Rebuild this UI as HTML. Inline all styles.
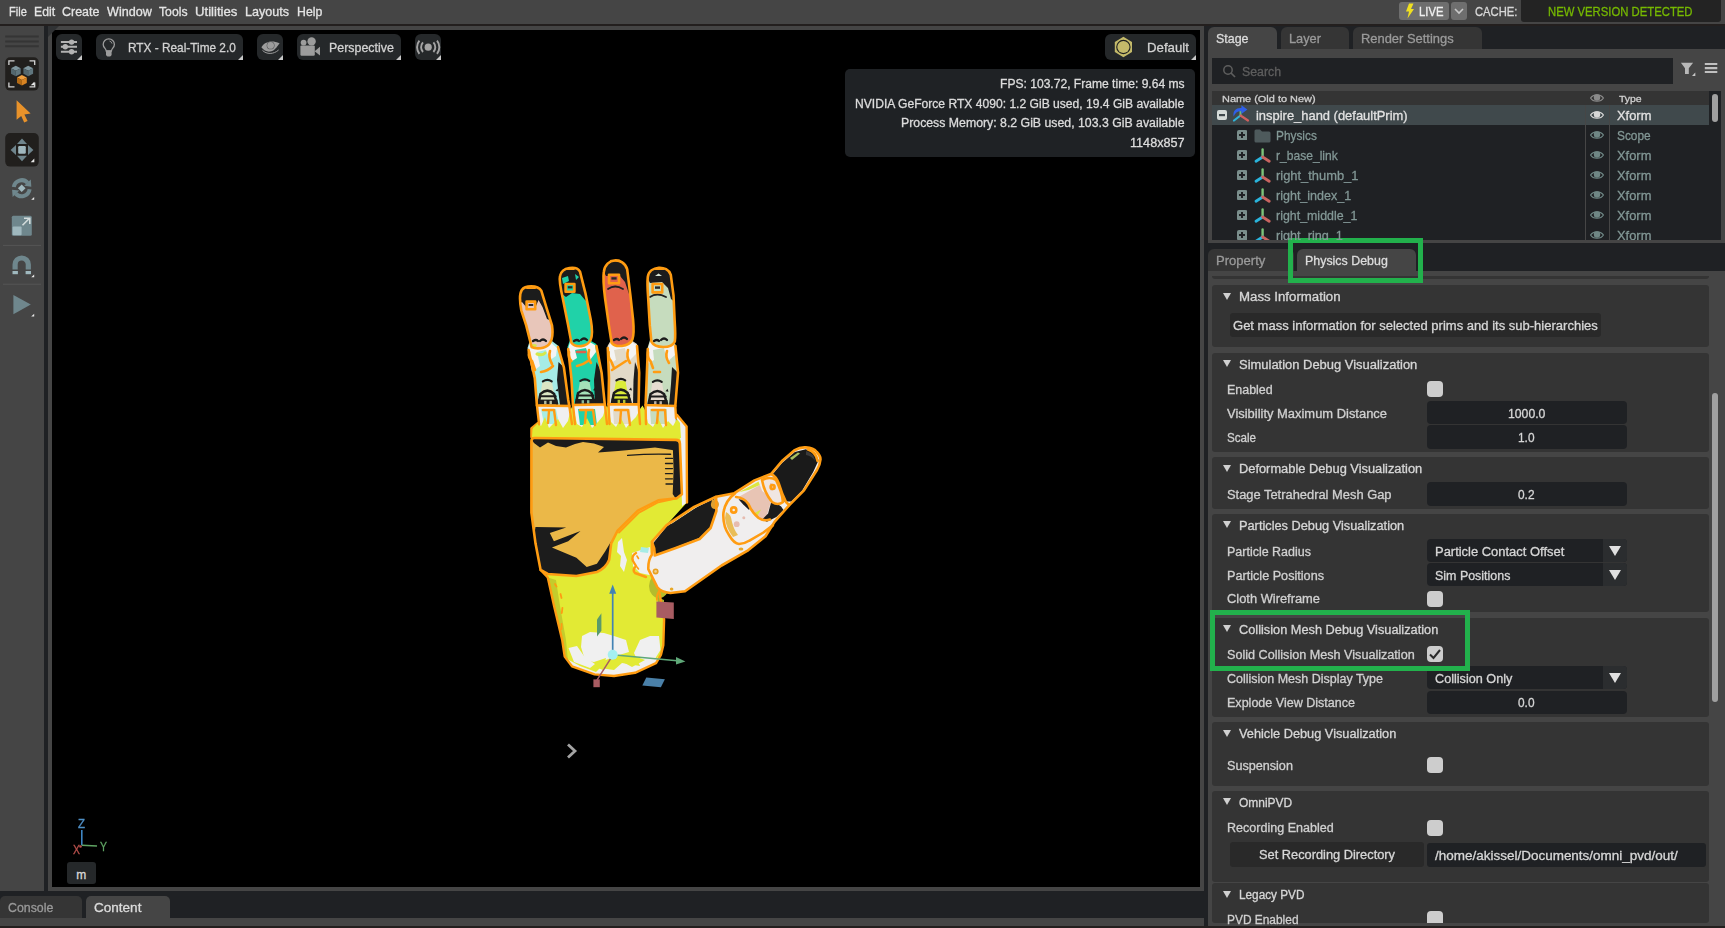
<!DOCTYPE html>
<html><head><meta charset="utf-8"><title>Isaac Sim</title><style>
html,body{margin:0;padding:0;background:#454545;}
#r{position:relative;width:1725px;height:928px;overflow:hidden;font-family:"Liberation Sans",sans-serif;}
#r div,#r svg,#r span{position:absolute;}
#r span{white-space:pre;line-height:16px;height:16px;transform-origin:0 50%;-webkit-text-stroke:0.3px currentColor;}
#r .clip{overflow:hidden;}
</style></head><body>
<div id="r">
<div style="left:0px;top:0px;width:1725px;height:928px;background:#454545;"></div>
<div style="left:0px;top:24px;width:1725px;height:2px;background:#231f1e;"></div>
<div style="left:44px;top:26px;width:4px;height:865px;background:#1f2124;"></div>
<div style="left:52px;top:30px;width:1148px;height:857px;background:#000;"></div>
<svg style="left:48px;top:26px" width="12" height="12" viewBox="0 0 12 12"><path d="M0 0 H11 L0 11 Z" fill="#303234"/></svg>
<div style="left:1204px;top:26px;width:4px;height:901px;background:#1f2124;"></div>
<div style="left:0px;top:891px;width:1204px;height:27px;background:#1f2124;"></div>
<div style="left:0px;top:896px;width:82px;height:22px;background:#353535;border-radius:5px 5px 0 0;"></div>
<div style="left:86px;top:896px;width:84px;height:22px;background:#454545;border-radius:5px 5px 0 0;"></div>
<div style="left:0px;top:926px;width:1725px;height:2px;background:#231f1e;"></div>
<div style="left:1399px;top:2px;width:50px;height:18px;background:#6e6e6e;border-radius:3px;"></div>
<div style="left:1451px;top:2px;width:16px;height:18px;background:#6e6e6e;border-radius:3px;"></div>
<div style="left:1521px;top:0px;width:200px;height:22px;background:#232323;border-radius:0 0 3px 3px;"></div>
<svg style="left:1405px;top:3px" width="10" height="16" viewBox="0 0 10 16"><path d="M4 0.5 L8.5 0.5 L6 6 L9 6 L2.5 15.5 L4 8.5 L1 8.5 Z" fill="#f0e020"/></svg>
<svg style="left:1453px;top:6px" width="12" height="10" viewBox="0 0 12 10"><path d="M2 3 L6 7 L10 3" stroke="#c8c8c8" stroke-width="1.6" fill="none"/></svg>
<div style="left:1208px;top:26px;width:517px;height:23px;background:#1f2124;"></div>
<div style="left:1208px;top:27px;width:69px;height:23px;background:#454545;border-radius:6px 6px 0 0;"></div>
<div style="left:1281px;top:27px;width:68px;height:22px;background:#353535;border-radius:6px 6px 0 0;"></div>
<div style="left:1353px;top:27px;width:129px;height:22px;background:#353535;border-radius:6px 6px 0 0;"></div>
<div style="left:1212px;top:58px;width:461px;height:26px;background:#1f2124;"></div>
<svg style="left:1222px;top:64px" width="15" height="15" viewBox="0 0 15 15"><circle cx="6" cy="6" r="4.2" stroke="#5e5e5e" stroke-width="1.5" fill="none"/><path d="M9 9 L13 13" stroke="#5e5e5e" stroke-width="1.7"/></svg>
<svg style="left:1678px;top:60px" width="44" height="18" viewBox="1678 60 44 18"><path d="M1680.9 62.7 H1693.1 L1688.8 68.3 V73.9 H1685 V68.3 Z" fill="#b8b8b8"/><path d="M1695.3 72.6 V76 H1692 Z" fill="#c8c8c8"/><path d="M1704.8 64 H1717.3 M1704.8 68.1 H1717.3 M1704.8 72 H1717.3" stroke="#c0c0c0" stroke-width="2.2"/></svg>
<div style="left:1212px;top:91px;width:509px;height:149px;background:#1f2124;"></div>
<div style="left:1212px;top:91px;width:497px;height:14px;background:#343434;"></div>
<div style="left:1212px;top:105px;width:497px;height:20px;background:#40494c;"></div>
<div style="left:1585px;top:105px;width:1px;height:135px;background:#464646;"></div>
<div style="left:1609px;top:105px;width:1px;height:135px;background:#464646;"></div>
<div style="left:1712px;top:94px;width:6px;height:28px;background:#a0a0a0;border-radius:3px;"></div>
<svg style="left:1590.1px;top:93px" width="14" height="10" viewBox="0 0 14 10"><path d="M0.6 5 C3 0.7 11 0.7 13.4 5 C11 9.3 3 9.3 0.6 5 Z" fill="none" stroke="#8a8a8a" stroke-width="1.2"/><circle cx="7" cy="4.5" r="3.2" fill="#8a8a8a"/></svg>
<svg style="left:1217px;top:110px" width="10" height="10" viewBox="0 0 10 10"><rect width="10" height="10" rx="2" fill="#d5dbd8"/><rect x="2" y="4" width="6" height="2.2" fill="#40494c"/></svg>
<svg style="left:1232px;top:105px" width="18" height="18" viewBox="0 0 18 18"><path d="M8.5 10.5 V5" stroke="#6fbf73" stroke-width="2"/><path d="M8.5 10.5 L2 15.5" stroke="#2fb4d8" stroke-width="2.2" stroke-linecap="round"/><path d="M8.5 10.5 L16 15.5" stroke="#d0605e" stroke-width="2.2" stroke-linecap="round"/><path d="M1.6 11.4 C0.6 5.6 4.4 2.6 9.4 3 V0.2 L15.4 4.6 L9.4 9 V6.2 C5.6 5.8 3.4 7.6 1.6 11.4 Z" fill="#2f5fe8"/></svg>
<svg style="left:1590.1px;top:110.2px" width="14" height="10" viewBox="0 0 14 10"><path d="M0.6 5 C3 0.7 11 0.7 13.4 5 C11 9.3 3 9.3 0.6 5 Z" fill="none" stroke="#d8d8d8" stroke-width="1.2"/><circle cx="7" cy="4.5" r="3.2" fill="#d8d8d8"/></svg>
<div style="left:1208px;top:243px;width:517px;height:28px;background:#1f2124;"></div>
<div style="left:1208px;top:249px;width:86px;height:22px;background:#353535;border-radius:6px 6px 0 0;"></div>
<div style="left:1297px;top:249px;width:119px;height:22px;background:#454545;border-radius:6px 6px 0 0;"></div>
<div style="left:1212px;top:276px;width:497px;height:3px;background:#343434;border-radius:0 0 3px 3px;"></div>
<div style="left:1212px;top:285px;width:497px;height:62px;background:#343434;border-radius:3px;"></div>
<div style="left:1212px;top:353px;width:497px;height:98.5px;background:#343434;border-radius:3px;"></div>
<div style="left:1212px;top:457px;width:497px;height:51.5px;background:#343434;border-radius:3px;"></div>
<div style="left:1212px;top:514px;width:497px;height:98px;background:#343434;border-radius:3px;"></div>
<div style="left:1212px;top:618px;width:497px;height:98.5px;background:#343434;border-radius:3px;"></div>
<div style="left:1212px;top:722px;width:497px;height:64px;background:#343434;border-radius:3px;"></div>
<div style="left:1212px;top:791px;width:497px;height:90.5px;background:#343434;border-radius:3px;"></div>
<div style="left:1212px;top:883px;width:497px;height:40px;background:#343434;border-radius:3px;"></div>
<div style="left:1712px;top:393px;width:6px;height:309px;background:#a0a0a0;border-radius:3px;"></div>
<svg style="left:1223px;top:293.0px" width="8" height="7" viewBox="0 0 8 7"><path d="M0 0 H8 L4 7 Z" fill="#d0d0d0"/></svg>
<div style="left:1230px;top:313px;width:371px;height:24px;background:#292929;border-radius:3px;"></div>
<svg style="left:1223px;top:360.3px" width="8" height="7" viewBox="0 0 8 7"><path d="M0 0 H8 L4 7 Z" fill="#d0d0d0"/></svg>
<div style="left:1427px;top:381px;width:16px;height:16px;background:#cdcdcd;border-radius:4px;"></div>
<div style="left:1427px;top:401px;width:200px;height:23px;background:#1f2124;border-radius:4px;"></div>
<div style="left:1427px;top:425px;width:200px;height:23.5px;background:#1f2124;border-radius:4px;"></div>
<svg style="left:1223px;top:464.5px" width="8" height="7" viewBox="0 0 8 7"><path d="M0 0 H8 L4 7 Z" fill="#d0d0d0"/></svg>
<div style="left:1427px;top:482px;width:200px;height:23.69999999999999px;background:#1f2124;border-radius:4px;"></div>
<svg style="left:1223px;top:521.3px" width="8" height="7" viewBox="0 0 8 7"><path d="M0 0 H8 L4 7 Z" fill="#d0d0d0"/></svg>
<div style="left:1427px;top:539px;width:200px;height:23px;background:#1f2124;border-radius:4px;"></div>
<div style="left:1603px;top:539px;width:24px;height:23px;background:#2b2d2f;border-radius:0 4px 4px 0;"></div>
<svg style="left:1609px;top:546px" width="12" height="10" viewBox="0 0 12 10"><path d="M0 0 H12 L6 10 Z" fill="#e0e0e0"/></svg>
<div style="left:1427px;top:563px;width:200px;height:23.299999999999955px;background:#1f2124;border-radius:4px;"></div>
<div style="left:1603px;top:563px;width:24px;height:23.299999999999955px;background:#2b2d2f;border-radius:0 4px 4px 0;"></div>
<svg style="left:1609px;top:570px" width="12" height="10" viewBox="0 0 12 10"><path d="M0 0 H12 L6 10 Z" fill="#e0e0e0"/></svg>
<div style="left:1427px;top:590.5px;width:16px;height:16px;background:#cdcdcd;border-radius:4px;"></div>
<svg style="left:1223px;top:625.3px" width="8" height="7" viewBox="0 0 8 7"><path d="M0 0 H8 L4 7 Z" fill="#d0d0d0"/></svg>
<div style="left:1427px;top:646.3px;width:16px;height:16px;background:#cdcdcd;border-radius:4px;"></div>
<svg style="left:1427px;top:646.3px" width="16" height="16" viewBox="0 0 16 16"><path d="M3 8.5 L6.5 12 L13 4" stroke="#2a2a2a" stroke-width="2" fill="none"/></svg>
<div style="left:1427px;top:666px;width:200px;height:23px;background:#1f2124;border-radius:4px;"></div>
<div style="left:1603px;top:666px;width:24px;height:23px;background:#2b2d2f;border-radius:0 4px 4px 0;"></div>
<svg style="left:1609px;top:673px" width="12" height="10" viewBox="0 0 12 10"><path d="M0 0 H12 L6 10 Z" fill="#e0e0e0"/></svg>
<div style="left:1427px;top:690.5px;width:200px;height:23.0px;background:#1f2124;border-radius:4px;"></div>
<svg style="left:1223px;top:729.6px" width="8" height="7" viewBox="0 0 8 7"><path d="M0 0 H8 L4 7 Z" fill="#d0d0d0"/></svg>
<div style="left:1427px;top:757px;width:16px;height:16px;background:#cdcdcd;border-radius:4px;"></div>
<svg style="left:1223px;top:798.4px" width="8" height="7" viewBox="0 0 8 7"><path d="M0 0 H8 L4 7 Z" fill="#d0d0d0"/></svg>
<div style="left:1427px;top:819.7px;width:16px;height:16px;background:#cdcdcd;border-radius:4px;"></div>
<div style="left:1230px;top:842px;width:194px;height:24.5px;background:#292929;border-radius:3px;"></div>
<div style="left:1427px;top:843.3px;width:279px;height:23.3px;background:#1f2124;border-radius:3px;"></div>
<svg style="left:1223px;top:890.6px" width="8" height="7" viewBox="0 0 8 7"><path d="M0 0 H8 L4 7 Z" fill="#d0d0d0"/></svg>
<div style="left:1427px;top:911.3px;width:16px;height:11.7px;background:#cdcdcd;border-radius:4px 4px 0 0"></div>
<div style="left:1288px;top:238px;width:135px;height:45px;box-sizing:border-box;border:5px solid #22b14c"></div>
<div style="left:1210px;top:610px;width:260px;height:60.6px;box-sizing:border-box;border:5px solid #22b14c"></div>
<div style="left:56px;top:34px;width:26px;height:26px;background:#25282a;border-radius:6px;"></div>
<svg style="left:77px;top:55px" width="5" height="5" viewBox="0 0 5 5"><path d="M5 0 V5 H0 Z" fill="#c8c8c8"/></svg>
<div style="left:96.3px;top:34px;width:146.7px;height:26px;background:#25282a;border-radius:6px;"></div>
<svg style="left:238.0px;top:55px" width="5" height="5" viewBox="0 0 5 5"><path d="M5 0 V5 H0 Z" fill="#c8c8c8"/></svg>
<div style="left:257px;top:34px;width:26px;height:26px;background:#25282a;border-radius:6px;"></div>
<svg style="left:278px;top:55px" width="5" height="5" viewBox="0 0 5 5"><path d="M5 0 V5 H0 Z" fill="#c8c8c8"/></svg>
<div style="left:297.3px;top:34px;width:103.7px;height:26px;background:#25282a;border-radius:6px;"></div>
<svg style="left:396.0px;top:55px" width="5" height="5" viewBox="0 0 5 5"><path d="M5 0 V5 H0 Z" fill="#c8c8c8"/></svg>
<div style="left:415px;top:34px;width:26px;height:26px;background:#25282a;border-radius:6px;"></div>
<svg style="left:436px;top:55px" width="5" height="5" viewBox="0 0 5 5"><path d="M5 0 V5 H0 Z" fill="#c8c8c8"/></svg>
<div style="left:1105.3px;top:34px;width:90.7px;height:26px;background:#25282a;border-radius:6px;"></div>
<svg style="left:1191.0px;top:55px" width="5" height="5" viewBox="0 0 5 5"><path d="M5 0 V5 H0 Z" fill="#c8c8c8"/></svg>
<div style="left:845px;top:69px;width:350px;height:88px;background:#1f2225;border-radius:5px;"></div>
<div style="left:67px;top:862px;width:29px;height:22px;background:#25282a;border-radius:3px;"></div>
<svg style="left:70px;top:825px" width="40" height="30" viewBox="0 0 40 30"><path d="M11.8 5 V20.3" stroke="#3f86c4" stroke-width="1.6"/><path d="M11.8 20.3 L27 21" stroke="#5fa463" stroke-width="1.6"/><circle cx="10.5" cy="21.5" r="1.3" fill="#b8504c"/></svg>
<svg style="left:560px;top:738px" width="24" height="26" viewBox="0 0 24 26"><path d="M8 6.5 L15 13 L8 19.5" stroke="#a4a4a4" stroke-width="2.8" fill="none" stroke-linejoin="miter"/></svg>
<div class="clip" style="left:0;top:0;width:1725px;height:240px">
<svg style="left:1237px;top:130px" width="10" height="10" viewBox="0 0 10 10"><rect width="10.4" height="10.4" rx="2" fill="#7a8e8c"/><path d="M5 2 V8 M2 5 H8" stroke="#1f2124" stroke-width="2"/></svg>
<svg style="left:1254px;top:129px" width="17" height="14" viewBox="0 0 17 14"><path d="M0.5 2 Q0.5 0.5 2 0.5 H6 L8 2.5 H15 Q16.5 2.5 16.5 4 V12 Q16.5 13.5 15 13.5 H2 Q0.5 13.5 0.5 12 Z" fill="#4e5a5c"/></svg>
<svg style="left:1590.1px;top:130.4px" width="14" height="10" viewBox="0 0 14 10"><path d="M0.6 5 C3 0.7 11 0.7 13.4 5 C11 9.3 3 9.3 0.6 5 Z" fill="none" stroke="#6f8785" stroke-width="1.2"/><circle cx="7" cy="4.5" r="3.2" fill="#6f8785"/></svg>
<svg style="left:1237px;top:150px" width="10" height="10" viewBox="0 0 10 10"><rect width="10.4" height="10.4" rx="2" fill="#7a8e8c"/><path d="M5 2 V8 M2 5 H8" stroke="#1f2124" stroke-width="2"/></svg>
<svg style="left:1253.5px;top:147px" width="17" height="17" viewBox="0 0 17 17"><path d="M8.6 10 V2.4" stroke="#7cc47a" stroke-width="2.4" stroke-linecap="round"/><path d="M8.6 10 L2 14.2" stroke="#2ab4dc" stroke-width="2.8" stroke-linecap="round"/><path d="M8.6 10 L15.2 14.2" stroke="#c86460" stroke-width="2.8" stroke-linecap="round"/></svg>
<svg style="left:1590.1px;top:150.4px" width="14" height="10" viewBox="0 0 14 10"><path d="M0.6 5 C3 0.7 11 0.7 13.4 5 C11 9.3 3 9.3 0.6 5 Z" fill="none" stroke="#6f8785" stroke-width="1.2"/><circle cx="7" cy="4.5" r="3.2" fill="#6f8785"/></svg>
<svg style="left:1237px;top:170px" width="10" height="10" viewBox="0 0 10 10"><rect width="10.4" height="10.4" rx="2" fill="#7a8e8c"/><path d="M5 2 V8 M2 5 H8" stroke="#1f2124" stroke-width="2"/></svg>
<svg style="left:1253.5px;top:167px" width="17" height="17" viewBox="0 0 17 17"><path d="M8.6 10 V2.4" stroke="#7cc47a" stroke-width="2.4" stroke-linecap="round"/><path d="M8.6 10 L2 14.2" stroke="#2ab4dc" stroke-width="2.8" stroke-linecap="round"/><path d="M8.6 10 L15.2 14.2" stroke="#c86460" stroke-width="2.8" stroke-linecap="round"/></svg>
<svg style="left:1590.1px;top:170.4px" width="14" height="10" viewBox="0 0 14 10"><path d="M0.6 5 C3 0.7 11 0.7 13.4 5 C11 9.3 3 9.3 0.6 5 Z" fill="none" stroke="#6f8785" stroke-width="1.2"/><circle cx="7" cy="4.5" r="3.2" fill="#6f8785"/></svg>
<svg style="left:1237px;top:190px" width="10" height="10" viewBox="0 0 10 10"><rect width="10.4" height="10.4" rx="2" fill="#7a8e8c"/><path d="M5 2 V8 M2 5 H8" stroke="#1f2124" stroke-width="2"/></svg>
<svg style="left:1253.5px;top:187px" width="17" height="17" viewBox="0 0 17 17"><path d="M8.6 10 V2.4" stroke="#7cc47a" stroke-width="2.4" stroke-linecap="round"/><path d="M8.6 10 L2 14.2" stroke="#2ab4dc" stroke-width="2.8" stroke-linecap="round"/><path d="M8.6 10 L15.2 14.2" stroke="#c86460" stroke-width="2.8" stroke-linecap="round"/></svg>
<svg style="left:1590.1px;top:190.4px" width="14" height="10" viewBox="0 0 14 10"><path d="M0.6 5 C3 0.7 11 0.7 13.4 5 C11 9.3 3 9.3 0.6 5 Z" fill="none" stroke="#6f8785" stroke-width="1.2"/><circle cx="7" cy="4.5" r="3.2" fill="#6f8785"/></svg>
<svg style="left:1237px;top:210px" width="10" height="10" viewBox="0 0 10 10"><rect width="10.4" height="10.4" rx="2" fill="#7a8e8c"/><path d="M5 2 V8 M2 5 H8" stroke="#1f2124" stroke-width="2"/></svg>
<svg style="left:1253.5px;top:207px" width="17" height="17" viewBox="0 0 17 17"><path d="M8.6 10 V2.4" stroke="#7cc47a" stroke-width="2.4" stroke-linecap="round"/><path d="M8.6 10 L2 14.2" stroke="#2ab4dc" stroke-width="2.8" stroke-linecap="round"/><path d="M8.6 10 L15.2 14.2" stroke="#c86460" stroke-width="2.8" stroke-linecap="round"/></svg>
<svg style="left:1590.1px;top:210.4px" width="14" height="10" viewBox="0 0 14 10"><path d="M0.6 5 C3 0.7 11 0.7 13.4 5 C11 9.3 3 9.3 0.6 5 Z" fill="none" stroke="#6f8785" stroke-width="1.2"/><circle cx="7" cy="4.5" r="3.2" fill="#6f8785"/></svg>
<svg style="left:1237px;top:230px" width="10" height="10" viewBox="0 0 10 10"><rect width="10.4" height="10.4" rx="2" fill="#7a8e8c"/><path d="M5 2 V8 M2 5 H8" stroke="#1f2124" stroke-width="2"/></svg>
<svg style="left:1253.5px;top:227px" width="17" height="17" viewBox="0 0 17 17"><path d="M8.6 10 V2.4" stroke="#7cc47a" stroke-width="2.4" stroke-linecap="round"/><path d="M8.6 10 L2 14.2" stroke="#2ab4dc" stroke-width="2.8" stroke-linecap="round"/><path d="M8.6 10 L15.2 14.2" stroke="#c86460" stroke-width="2.8" stroke-linecap="round"/></svg>
<svg style="left:1590.1px;top:230.4px" width="14" height="10" viewBox="0 0 14 10"><path d="M0.6 5 C3 0.7 11 0.7 13.4 5 C11 9.3 3 9.3 0.6 5 Z" fill="none" stroke="#6f8785" stroke-width="1.2"/><circle cx="7" cy="4.5" r="3.2" fill="#6f8785"/></svg>
<span style="left:1276.3px;top:127.7px;font-size:13.5px;color:#839896;transform:scaleX(0.8771)">Physics</span>
<span style="left:1616.7px;top:127.7px;font-size:13.5px;color:#839896;transform:scaleX(0.8803)">Scope</span>
<span style="left:1276.3px;top:147.7px;font-size:13.5px;color:#839896;transform:scaleX(0.8950)">r_base_link</span>
<span style="left:1616.7px;top:147.7px;font-size:13.5px;color:#839896;transform:scaleX(0.9551)">Xform</span>
<span style="left:1276.3px;top:167.7px;font-size:13.5px;color:#839896;transform:scaleX(0.9547)">right_thumb_1</span>
<span style="left:1616.7px;top:167.7px;font-size:13.5px;color:#839896;transform:scaleX(0.9551)">Xform</span>
<span style="left:1276.3px;top:187.7px;font-size:13.5px;color:#839896;transform:scaleX(0.9277)">right_index_1</span>
<span style="left:1616.7px;top:187.7px;font-size:13.5px;color:#839896;transform:scaleX(0.9551)">Xform</span>
<span style="left:1276.3px;top:207.7px;font-size:13.5px;color:#839896;transform:scaleX(0.9191)">right_middle_1</span>
<span style="left:1616.7px;top:207.7px;font-size:13.5px;color:#839896;transform:scaleX(0.9551)">Xform</span>
<span style="left:1276.3px;top:227.7px;font-size:13.5px;color:#839896;transform:scaleX(0.9383)">right_ring_1</span>
<span style="left:1616.7px;top:227.7px;font-size:13.5px;color:#839896;transform:scaleX(0.9551)">Xform</span>
</div>
<!-- left toolbar -->
<svg style="left:0;top:26px" width="44" height="300" viewBox="0 26 44 300">
  <path d="M5.2 36.6 H38.8 M5.2 41.4 H38.8 M5.2 46.2 H38.8" stroke="#353535" stroke-width="2"/>
  <!-- select-mode button -->
  <rect x="5.2" y="57.2" width="33.6" height="33.4" rx="5" fill="#211f1d"/>
  <path d="M8.9 65 V60.9 H14.5 M29.5 60.9 H34.7 V65 M8.9 82.5 V86.9 H14.5 M29.5 86.9 H34.7 V82.5" stroke="#d4d4d4" stroke-width="1.3" fill="none"/>
  <!-- left cube -->
  <path d="M11 68.3 L15.8 65.8 L20.7 68.3 L15.8 70.8 Z" fill="#7f969e"/>
  <path d="M11 68.3 L15.8 70.8 V76.2 L11 73.7 Z" fill="#53676f"/>
  <path d="M20.7 68.3 L15.8 70.8 V76.2 L20.7 73.7 Z" fill="#60767e"/>
  <!-- right cube -->
  <path d="M23.4 68.3 L28.2 65.8 L33.1 68.3 L28.2 70.8 Z" fill="#7f969e"/>
  <path d="M23.4 68.3 L28.2 70.8 V76.2 L23.4 73.7 Z" fill="#53676f"/>
  <path d="M33.1 68.3 L28.2 70.8 V76.2 L33.1 73.7 Z" fill="#60767e"/>
  <!-- orange cube -->
  <path d="M17 77.6 L21.9 75.1 L26.8 77.6 L21.9 80.1 Z" fill="#f0a040"/>
  <path d="M17 77.6 L21.9 80.1 V85.4 L17 82.9 Z" fill="#b46a14"/>
  <path d="M26.8 77.6 L21.9 80.1 V85.4 L26.8 82.9 Z" fill="#d98422"/>
  <path d="M34.3 81.7 V85.3 H30.7 Z" fill="#e8e8e8"/>
  <!-- arrow -->
  <path d="M16.6 100.3 L30.6 113.6 L24.4 114.6 L27.6 121 L24.2 122.4 L21.2 116 L16.6 119.8 Z" fill="#e8922a"/>
  <!-- move button -->
  <rect x="5.2" y="133" width="33.6" height="33.6" rx="5" fill="#211f1d"/>
  <g fill="#6f858d">
    <path d="M22 138.6 L27 144 H17 Z"/>
    <path d="M22 161.2 L27 155.8 H17 Z"/>
    <path d="M10.6 149.9 L16 144.9 V154.9 Z"/>
    <path d="M33.4 149.9 L28 144.9 V154.9 Z"/>
  </g>
  <rect x="18.2" y="146.1" width="7.6" height="7.6" rx="1.2" fill="#9fb7be"/>
  <path d="M34.3 158.6 V162.2 H30.7 Z" fill="#e8e8e8"/>
  <!-- rotate -->
  <g fill="none" stroke="#6f878d" stroke-width="4">
    <path d="M13.78 187.09 A8.0 8.0 0 0 1 27.65 182.85"/>
    <path d="M29.62 189.31 A8.0 8.0 0 0 1 15.75 193.55"/>
  </g>
  <path d="M30.76 179.45 L31.34 186.67 L24.15 185.84 Z" fill="#6f878d"/>
  <path d="M12.64 196.95 L12.06 189.73 L19.25 190.56 Z" fill="#6f878d"/>
  <path d="M21.7 184.4 L25.5 188.2 L21.7 192 L17.9 188.2 Z" fill="#9fb8be"/>
  <path d="M34.2 197 V199.8 H31.2 Z" fill="#e8e8e8"/>
  <!-- scale -->
  <rect x="11.8" y="215.8" width="20" height="20" rx="1.5" fill="#6f878d"/>
  <rect x="12.6" y="226.4" width="9" height="8.8" rx="1" fill="#9fb8be"/>
  <path d="M22.5 225.3 L29 218.8" stroke="#d4dcdc" stroke-width="1.6"/>
  <path d="M24 218.2 H29.8 V224" stroke="#d4dcdc" stroke-width="1.6" fill="none"/>
  <path d="M3 245.4 H41" stroke="#565656" stroke-width="1"/>
  <!-- magnet -->
  <path d="M15.1 269.5 V264.6 A6.6 6.6 0 0 1 28.3 264.6 V269.5" stroke="#6f878d" stroke-width="5.2" fill="none"/>
  <rect x="12.5" y="271" width="5.4" height="3.2" fill="#9fb8be"/><rect x="25.6" y="271" width="5.4" height="3.2" fill="#9fb8be"/>
  <path d="M34.2 274.4 V277.2 H31.2 Z" fill="#e8e8e8"/>
  <path d="M3 284.2 H41" stroke="#565656" stroke-width="1"/>
  <!-- play -->
  <path d="M13.4 295 L30.8 304.6 L13.4 314.2 Z" fill="#6f878d"/>
  <path d="M34.2 313.8 V316.6 H31.2 Z" fill="#e8e8e8"/>
</svg>

<!-- viewport toolbar icons -->
<svg style="left:52px;top:30px" width="400" height="34" viewBox="52 30 400 34">
  <!-- sliders -->
  <path d="M60.9 42.1 H77 M60.9 46.8 H77 M60.9 51.8 H77" stroke="#b2b2b2" stroke-width="2"/>
  <circle cx="71.6" cy="42.1" r="2.7" fill="#b2b2b2"/><circle cx="65.3" cy="46.8" r="2.7" fill="#b2b2b2"/><circle cx="71.6" cy="51.8" r="2.7" fill="#b2b2b2"/>
  <!-- bulb -->
  <path d="M106.2 51 C106 48.5 103.2 47.6 103.2 44.4 A5.6 5.6 0 0 1 114.4 44.4 C114.4 47.6 111.6 48.5 111.4 51 Z" fill="none" stroke="#9c9c9c" stroke-width="1.3"/>
  <path d="M106 50.6 H111.6 V54.2 Q111.6 56.4 108.8 56.6 Q106 56.4 106 54.2 Z" fill="#9c9c9c"/>
  <path d="M109.5 41 Q111.6 41.6 112 43.6" stroke="#9c9c9c" stroke-width="0.9" fill="none"/>
  <!-- eye -->
  <path d="M261.4 47.2 C264.5 42 271 39.6 279.6 43.2 C276.6 47.6 274 51 270 51.6 C266.5 52 263.5 50 261.4 47.2 Z" fill="#9c9c9c"/>
  <path d="M261.4 47.2 C264.5 42 271 39.6 279.6 43.2" stroke="#25282a" stroke-width="0" fill="none"/>
  <circle cx="270.6" cy="45.4" r="3.9" fill="#4a4c4e"/>
  <circle cx="270.6" cy="45.4" r="3.4" fill="#9c9c9c"/>
  <path d="M262.5 50.4 C266.5 54.4 273.5 54.6 278.6 50" stroke="#9c9c9c" stroke-width="1" fill="none"/>
  <!-- camera -->
  <circle cx="303.6" cy="42.6" r="2.9" fill="#9c9c9c"/><circle cx="311.6" cy="41.4" r="4.2" fill="#9c9c9c"/>
  <rect x="300.4" y="45.4" width="14.4" height="10.4" rx="1.2" fill="#9c9c9c"/>
  <path d="M314.6 51.2 L320 46.8 V55.4 Z" fill="#9c9c9c"/>
  <!-- stream -->
  <circle cx="428.2" cy="47.2" r="3.6" fill="#a4a4a4"/>
  <g fill="none" stroke="#a4a4a4" stroke-width="1.9">
    <path d="M423 42.4 A7 7 0 0 0 423 52"/><path d="M433.4 42.4 A7 7 0 0 1 433.4 52"/>
    <path d="M419.4 40.6 A10.5 10.5 0 0 0 419.4 53.8"/><path d="M437 40.6 A10.5 10.5 0 0 1 437 53.8"/>
  </g>
</svg>
<svg style="left:1110px;top:34px" width="28" height="26" viewBox="1110 34 28 26">
  <path d="M1123.4 36.7 L1132 41.9 V52.1 L1123.4 57.3 L1114.8 52.1 V41.9 Z" fill="#c4ba6a"/>
  <circle cx="1123.4" cy="47" r="7.2" fill="#1d1f20"/>
  <circle cx="1123.4" cy="47" r="6.1" fill="#c4ba6a"/>
</svg>

<!-- robot hand -->
<svg style="left:500px;top:240px" width="340" height="460" viewBox="500 240 340 460">
<defs>
  <clipPath id="cP"><path id="pP" d="M531.6 347 L526.2 325.4 L521.3 310.3 C519.4 300 519.8 293 521.8 290 C525 285.3 537.5 284.8 541.3 290.6 L546.6 308.2 L552 325.4 C553.4 335 552.6 340 549 344.4 C545 348.8 536 349.2 531.6 347 Z"/></clipPath>
  <clipPath id="cR"><path id="pR" d="M571.4 342.7 L568.2 325.4 L562.8 298.5 C560 286 559 280 560 276 C562 266.5 576.5 265.6 580 271.6 L585.4 293.1 L590.8 320 C592.6 330 592.8 335 590.6 340 C586.8 347.8 575 347.6 571.4 342.7 Z"/></clipPath>
  <clipPath id="cM"><path id="pM" d="M611.6 342.7 L608.9 325.4 L605.1 298.5 C603.4 285 603 278 603.8 272 C605.4 257.4 623.5 256.6 627.2 269.4 L630.4 295.3 L633.1 320 C634 330 634 335 632.4 339.4 C628.6 347.6 615 347.6 611.6 342.7 Z"/></clipPath>
  <clipPath id="cI"><path id="pI" d="M651.4 341.6 L649.8 325.4 L648.2 298.5 C647.4 288 647.2 282 647.8 277 C649.4 265.4 667.6 264.6 670.8 274.8 L673.5 295.3 L674.6 320 C675.4 332 675.6 337 674.8 341.4 C671.6 349 655 348.6 651.4 341.6 Z"/></clipPath>
  <clipPath id="cPad"><path id="pPad" d="M531.4 441 Q531.4 438 534.4 438 L676 439.9 Q679.8 440 679.9 443.6 L681.9 494.2 L676.8 498.3 L658.3 500.3 L637.9 510.6 L617.4 531 L611.2 543.3 L609.2 559.7 Q606 568 596.9 572 L576.4 576 L547.8 574 L540.6 569.9 L535.5 543.3 L531.4 512.6 Z"/></clipPath>
  <clipPath id="cTh"><path id="pTh" d="M652 541.7 L666.6 525.2 L694.1 506.9 L716.1 496.8 L734.4 493.2 L754.5 480.4 L771 474 L782 461.1 L794.8 450.1 Q800 447 805.8 447.4 Q813.5 448 816.8 452 Q820.6 456 820.5 459.3 Q820 465 816.8 470.3 L804 490.4 L789.3 505.1 L774.7 521.6 L765.5 536.2 L747.2 550.9 L721.6 565.5 L685 591.2 L670.3 593 Q661 592 657.5 587.5 L648.3 569.2 Q648 560 652 554.5 Z"/></clipPath>
</defs>
<g stroke-linejoin="round" stroke-linecap="round" style="filter:blur(0.45px)">
<!-- wrist / body yellow -->
<path d="M531.4 437 L531.4 428.5 L538 423 L680 423 L687 428.7 L687 502.4 L652 541 L650 560 L657 575 L659.3 590.4 L664.1 619.5 L663.3 645.3 L660.9 655 L656 663.1 L635 672.8 L614 676 L594.6 674.4 L572 666.3 L564.7 656.6 L562.3 640.5 L554.2 606.6 L547.8 577.5 L535 545 Z" fill="#e2ea34"/>
<!-- shading on wrist -->
<path d="M547.8 577.5 L554.2 606.6 L562.3 640.5 L564.7 656.6 L568 661 L566 640 L560 606 L556 580 Z" fill="#c4cc2c"/>
<ellipse cx="659" cy="586" rx="10" ry="12" fill="#b4bc2c"/>
<path d="M657 597 L664 600 L664.1 619.5 L660 612 Z" fill="#aab02a"/>
<!-- white patches wrist -->
<path d="M581 647 L582 636 L590 632 L604 633 L614 636 L626 640 L629 652 L616 656 L598 663 L585 660 Z" fill="#f0f0f0"/>
<path d="M568.5 648 L577 646 L584 656 L595 664 L590 668 L574 662 Z" fill="#f0f0f0"/>
<path d="M634 653 L640 640 L650 636 L659 636 L660.5 650 L653 662 L641 668 Z" fill="#f0f0f0"/>
<path d="M567 659 L572 666.3 L594.6 674.4 L614 676 L635 672.8 L656 663.1 L659 657 L640 666 L622 663 L614 670 L600 668 L596 672 L580 666 Z" fill="#f0f0f0"/>
<path d="M594 662 L606 658 L603 670 L598 668 Z" fill="#e2ea34"/>
<path d="M621 661 L634 656 L645 660 L632 667 Z" fill="#e2ea34"/>
<!-- white at thumb root -->
<path d="M618 542 L622 538 L624 552 L627 560 L624 572 L620 566 L621 556 L617 552 Z" fill="#f0f0f0"/>
<!-- wrist outline -->
<path d="M540.6 570 L547.8 577.5 L554.2 606.6 L562.3 640.5 L564.7 656.6 L572 666.3 L594.6 674.4 L614 676 L635 672.8 L656 663.1 L660.9 655 L663.3 645.3 L664.1 619.5 L659.3 592" fill="none" stroke="#ff9c12" stroke-width="2.4"/>
<path d="M555 584 l1.6 2.6 M560.5 594 l1 4 M562.4 608 l-0.6 5 M561.6 624 l0 5" stroke="#ff9c12" stroke-width="1.8" fill="none"/>
<!-- right white side of palm -->
<path d="M677 414.7 L686.6 426.6 L687 502.4 L682 506 L680.5 440 L676 425 Z" fill="#f0f0f0"/>
<path d="M531.4 437 L531.4 428.5 L538 423 M676.9 414.7 L686.6 426.6 L687 502.4" fill="none" stroke="#ff9c12" stroke-width="2.4"/>

<!-- finger bases (knuckles) -->
<g>
 <path d="M536.9 405 L539.1 424.4 L545 430 L566 430 L572 424 L569.3 406 Z" fill="#f0f0f0"/>
 <path d="M541 409 L556 409 L559 424 L544 424 Z" fill="#a6ece6"/>
 <path d="M573 405 L575 424 L580 430 L603 430 L607 424 L604.8 404 Z" fill="#f0f0f0"/>
 <path d="M578 409 L595 409 L597 425 L580 425 Z" fill="#20d2a8"/>
 <path d="M608.5 404 L609.5 424 L614 430 L636 430 L640 424 L638.6 404 Z" fill="#f0f0f0"/>
 <path d="M613 409 L630 409 L631 424 L614 424 Z" fill="#e2dac8"/>
 <path d="M645.6 405 L646 424 L650 430 L672 430 L676 424 L675.3 406 Z" fill="#f0f0f0"/>
 <path d="M650 409 L667 409 L667 424 L651 424 Z" fill="#c6dcbe"/>
 <!-- yellow spikes between -->
 <path d="M532 437 L533 428 L538 423 L541 426 L545 417 L549 428 L553 424 L558 419 L563 428 L568 421 L570.5 410 L572 406.5 L574 411 L577 424 L582 427 L587 418 L592 428 L598 422 L603 416 L605.5 408 L607 405.6 L608.6 409 L611 422 L616 427 L621 418 L626 428 L631 422 L636 417 L640 409 L642.5 405.6 L645 410 L648 423 L653 427 L658 418 L663 428 L668 421 L673 426 L677 419 L680 423 L681 438 Z" fill="#e2ea34"/>
 <g fill="none" stroke="#ff9c12" stroke-width="2.4">
  <path d="M543 410 H554 L556 425 M549 411 L548 423"/>
  <path d="M580 410 H593 L595 425 M586 411 L585 423"/>
  <path d="M615 410 H628 L630 425 M621 411 L620 423"/>
  <path d="M652 410 H665 L666 425 M658 411 L657 423"/>
  <path d="M536.9 405 L539.1 424.4 M569.3 406 L572 424 M573 405 L575 424 M604.8 404 L607 424 M608.5 404 L609.5 424 M638.6 404 L640 424 M645.6 405 L646 424 M675.3 406 L676 418"/>
 </g>
</g>

<!-- proximal segments -->
<g>
 <!-- pinky -->
 <path d="M527.5 348 L534.8 378.1 L536.9 405.4 L569.3 406 L568.2 399.7 L563.9 367.3 L558.5 346 L548 338 L530 340 Z" fill="#a6ece6"/>
 <path d="M528 350 L532 372 L540 366 L537 352 L546 350 L550 360 L556 356 L557 348 L548 340 L530 342 Z" fill="#f4f4f4"/>
 <path d="M558.5 362 L563.9 367.3 L568.2 399.7 L569 405.6 L560 405.4 L557 380 Z" fill="#1c1c1c"/>
 <g transform="translate(547.5 404.8)"><path d="M-5 -23 L4.4 -23 L8.6 0 L-9 0 Z" fill="#dce6c4"/><path d="M-4.6 -23.4 Q0 -26.4 4.2 -23.4" stroke="#1c1c1c" stroke-width="2.2" fill="none"/><path d="M-9 -1 L-7 -11 Q0 -17.4 6.6 -11 L9.6 -1" stroke="#1c1c1c" stroke-width="2.5" fill="none"/><path d="M-7.6 -8.6 H8.2" stroke="#1c1c1c" stroke-width="2"/><rect x="-9.4" y="-5.2" width="19.4" height="5" fill="#1c1c1c"/><rect x="-3.4" y="-4" width="2.4" height="3.4" fill="#dce6c4" opacity="0.8"/><rect x="2" y="-4" width="2.4" height="3.4" fill="#dce6c4" opacity="0.8"/><path d="M8 -14 l2 -2.4 l1 3 z" fill="#1c1c1c"/></g>
 <path d="M537 354 q6 2 8 -1" stroke="#d6e84a" stroke-width="3" fill="none"/>
 <!-- ring -->
 <path d="M567.5 347 L571.4 378 L573 405 L604.8 404.4 L601.6 372.7 L596.2 344 L586 338 L570 340 Z" fill="#20d2a8"/>
 <path d="M568 349 L570.5 362 L577 358 L575 350 L586 348 L590 360 L596 352 L595 345 L586 340 L570 342 Z" fill="#f4f4f4"/>
 <path d="M596.5 362 L601.6 372.7 L604.8 404.4 L595 404.6 L594 380 Z" fill="#1c1c1c"/>
 <g transform="translate(585 404.2)"><path d="M-5 -23 L4.4 -23 L8.6 0 L-9 0 Z" fill="#a4e0b8"/><path d="M-4.6 -23.4 Q0 -26.4 4.2 -23.4" stroke="#1c1c1c" stroke-width="2.2" fill="none"/><path d="M-9 -1 L-7 -11 Q0 -17.4 6.6 -11 L9.6 -1" stroke="#1c1c1c" stroke-width="2.5" fill="none"/><path d="M-7.6 -8.6 H8.2" stroke="#1c1c1c" stroke-width="2"/><rect x="-9.4" y="-5.2" width="19.4" height="5" fill="#1c1c1c"/><rect x="-3.4" y="-4" width="2.4" height="3.4" fill="#a4e0b8" opacity="0.8"/><rect x="2" y="-4" width="2.4" height="3.4" fill="#a4e0b8" opacity="0.8"/><path d="M8 -14 l2 -2.4 l1 3 z" fill="#1c1c1c"/></g>
 <path d="M577 352 h8" stroke="#e0624c" stroke-width="2.6"/>
 <!-- middle -->
 <path d="M607.5 346 L609 378 L608.5 404.4 L638.6 404.4 L639.2 372.7 L637 344 L628 338 L611 340 Z" fill="#e2dac8"/>
 <path d="M608 348 L609 364 L616 360 L614 350 L625 348 L628 362 L636 354 L636.5 345 L628 340 L611 342 Z" fill="#f4f4f4"/>
 <path d="M635 362 L639.2 372.7 L638.6 404.4 L633 404.4 L633.5 380 Z" fill="#1c1c1c"/>
 <g transform="translate(621 403.8)"><path d="M-5 -23 L4.4 -23 L8.6 0 L-9 0 Z" fill="#dcec38"/><path d="M-4.6 -23.4 Q0 -26.4 4.2 -23.4" stroke="#1c1c1c" stroke-width="2.2" fill="none"/><path d="M-9 -1 L-7 -11 Q0 -17.4 6.6 -11 L9.6 -1" stroke="#1c1c1c" stroke-width="2.5" fill="none"/><path d="M-7.6 -8.6 H8.2" stroke="#1c1c1c" stroke-width="2"/><rect x="-9.4" y="-5.2" width="19.4" height="5" fill="#1c1c1c"/><rect x="-3.4" y="-4" width="2.4" height="3.4" fill="#dcec38" opacity="0.8"/><rect x="2" y="-4" width="2.4" height="3.4" fill="#dcec38" opacity="0.8"/><path d="M8 -14 l2 -2.4 l1 3 z" fill="#1c1c1c"/></g>
 <!-- index -->
 <path d="M647.8 347 L646.7 378 L645.6 405 L675.3 406 L678 372.7 L675.3 344 L668 338 L650 340 Z" fill="#c6dcbe"/>
 <path d="M648 349 L647.5 364 L654 360 L653 350 L664 348 L667 362 L675 355 L675 346 L668 340 L650 342 Z" fill="#f4f4f4"/>
 <path d="M672 367 L678 372.7 L675.3 406 L669 405.8 L671 384 Z" fill="#1c1c1c"/>
 <g transform="translate(657.5 405.2)"><path d="M-5 -23 L4.4 -23 L8.6 0 L-9 0 Z" fill="#e6dcd0"/><path d="M-4.6 -23.4 Q0 -26.4 4.2 -23.4" stroke="#1c1c1c" stroke-width="2.2" fill="none"/><path d="M-9 -1 L-7 -11 Q0 -17.4 6.6 -11 L9.6 -1" stroke="#1c1c1c" stroke-width="2.5" fill="none"/><path d="M-7.6 -8.6 H8.2" stroke="#1c1c1c" stroke-width="2"/><rect x="-9.4" y="-5.2" width="19.4" height="5" fill="#1c1c1c"/><rect x="-3.4" y="-4" width="2.4" height="3.4" fill="#e6dcd0" opacity="0.8"/><rect x="2" y="-4" width="2.4" height="3.4" fill="#e6dcd0" opacity="0.8"/><path d="M8 -14 l2 -2.4 l1 3 z" fill="#1c1c1c"/></g>
 <g fill="none" stroke="#ff9c12" stroke-width="2.6">
  <path d="M528.6 350 L534.8 378.1 L536.9 405.4 L569.3 406 L568.2 399.7 L563.9 367.3 L558 347"/>
  <path d="M568.2 349 L571.4 378 L573 405 L604.8 404.4 L601.6 372.7 L596.4 346"/>
  <path d="M607.8 348 L609 378 L608.5 404.4 L638.6 404.4 L639.2 372.7 L637 346"/>
  <path d="M647.8 349 L646.7 378 L645.6 405 L675.3 406 L678 372.7 L675.4 346"/>
  <!-- joint curls -->
  <path d="M529 352 Q528 358 532 361 L535 370 M550 351 Q548 357 552 364 M541 372 Q548 371 553 366"/>
  <path d="M569 352 Q568 358 571.5 361 M589 350 Q587 357 591 363 M577 366 Q583 365 588 361"/>
  <path d="M608.6 352 Q608 358 611 361 L614 368 M628 350 Q626 357 630 363 M612 370 L626 361"/>
  <path d="M648 352 Q647.4 358 650.4 361 L653 368 M667 351 Q665 357 669 363 M654 372 h6"/>
 </g>
</g>

<!-- distal segments -->
<g>
 <!-- pinky -->
 <use href="#pP" fill="#e8c6ba"/>
 <g clip-path="url(#cP)">
  <path d="M518 284 H546 L549 300 L554 322 L547 319 L542.5 307 L538.5 300 L536 306 L531 304 L527 308 L522 302 L518 304 Z" fill="#1c1c1c"/>
  <path d="M533 341 q3 -2 5 0 M540 341 q3 -3 6 0" stroke="#1c1c1c" stroke-width="2.3" fill="none"/>
  <path d="M531 345 q3 -2 6 0 l-2 3 z" fill="#d6e84a"/>
 </g>
 <rect x="526.6" y="301.6" width="8.6" height="7.6" fill="#e8c6ba" stroke="#ff9c12" stroke-width="2.6"/>
 <rect x="528.6" y="304" width="4.6" height="2" fill="#2a2a2a"/>
 <use href="#pP" fill="none" stroke="#ff9c12" stroke-width="2.6"/>
 <!-- ring -->
 <use href="#pR" fill="#20d2a8"/>
 <g clip-path="url(#cR)">
  <path d="M556 264 H584 L588 290 L590 304 L585 300 L580 294 L572 293 L566 297 L562 294 L560 280 Z" fill="#1c1c1c"/>
  <path d="M562 278 L568 276 L569 281 L563 284 Z M575 274 L579 277 L576 280 Z" fill="#20d2a8"/>
  <path d="M574 341 q3 -2 5 0 M581 340 q3 -3 6 0" stroke="#1c1c1c" stroke-width="2.3" fill="none"/>
 </g>
 <rect x="565.6" y="284" width="8.8" height="7.8" fill="#20d2a8" stroke="#ff9c12" stroke-width="2.6"/>
 <rect x="567.8" y="286.2" width="4.6" height="2.2" fill="#2a2a2a"/>
 <use href="#pR" fill="none" stroke="#ff9c12" stroke-width="2.6"/>
 <!-- middle -->
 <use href="#pM" fill="#e0624c"/>
 <g clip-path="url(#cM)">
  <path d="M600 255 H630 L632 280 L633.5 298 L629 294 L625 282 L620 276 L606 276 L603 270 Z" fill="#1c1c1c"/>
  <path d="M608 289 Q615 284 623 289" stroke="#222" stroke-width="1.8" fill="none"/>
  <path d="M614 340 q3 -2 5 0 M621 339 q3 -3 6 0" stroke="#1c1c1c" stroke-width="2.3" fill="none"/>
 </g>
 <rect x="609" y="274.8" width="10" height="8.4" fill="#e0624c" stroke="#ff9c12" stroke-width="2.6"/>
 <rect x="611.4" y="277.2" width="5.2" height="2.4" fill="#2a2a2a"/>
 <use href="#pM" fill="none" stroke="#ff9c12" stroke-width="2.6"/>
 <!-- index -->
 <use href="#pI" fill="#c6dcbe"/>
 <g clip-path="url(#cI)">
  <path d="M645 263 H673 L675 290 L676 303 L671 299 L668 288 L662 282 L650 283 L648 279 Z" fill="#1c1c1c"/>
  <path d="M655 276 L658.6 273.6 L662 276 Z" fill="#d8e4d4"/>
  <path d="M650 297 Q657 292 666 297" stroke="#222" stroke-width="1.8" fill="none"/>
  <path d="M654 341 q3 -2 5 0 M661 340 q3 -3 6 0" stroke="#1c1c1c" stroke-width="2.3" fill="none"/>
 </g>
 <rect x="652.6" y="284" width="9.6" height="8.4" fill="#c6dcbe" stroke="#ff9c12" stroke-width="2.6"/>
 <rect x="655" y="286.4" width="5" height="2.4" fill="#2a2a2a"/>
 <use href="#pI" fill="none" stroke="#ff9c12" stroke-width="2.6"/>
 <path d="M527 288.2 h8 M566 269 h8 M611 260.6 h8 M655.5 269 h8" stroke="#ff9c12" stroke-width="1.8"/>
</g>

<!-- palm pad -->
<use href="#pPad" fill="#ebb848"/>
<g clip-path="url(#cPad)">
 <path d="M530 437 L681 438 L681 452.5 L672 450 L655 447.6 L640 449 L618 451 L598 452.4 L604 447 L594 443.4 L583 442 L575 444 L566 447.4 L556 446 L548 442.6 L540 447.6 L534 443 Z" fill="#1c1c1c"/>
 <path d="M672.7 443 L681 443 L683 497 L676 499 L672.7 494 L673.6 470 Z" fill="#1c1c1c"/>
 <path d="M665.5 458.4 h7 M665.5 463.5 h7 M665.5 468.6 h7 M665.5 473.7 h7 M665.5 478.8 h7 M666 484 h6.6" stroke="#1c1c1c" stroke-width="1.3"/>
 <path d="M627.6 455.4 Q650 453.6 670.6 454.3" stroke="#1c1c1c" stroke-width="1.4" fill="none"/>
 <path d="M617.4 531 L637.9 510.6 L658.3 500.3 L676.8 498.3 L681.9 494.2 L683 505 L640 516 L622 534 L612 548 L609 562 L602 572 L620 572 L690 500 L690 490 Z" fill="#e8a030" opacity="0.5"/>
 <path d="M535.5 527 L566.2 527.4 L549.8 533 L553.9 541.3 L580.5 531 L568.2 541.3 L551.9 547.4 L576.4 557.7 L586.7 566.9 L596.9 563.8 L605.1 551.5 L611.2 541.3 L612 560 L602 572 L576.4 578 L547.8 576 L538 571 L533 543.3 Z" fill="#1c1c1c"/>
</g>
<use href="#pPad" fill="none" stroke="#ff9c12" stroke-width="2.6"/>
<path d="M676.8 498.3 L658.3 502.3 L639 512.6 L619 532.6" stroke="#ff9c12" stroke-width="1.8" fill="none"/>

<!-- thumb -->
<path d="M632 553 L650 547 L654 576 L640 573 L633 566 Z" fill="#f0f0f0"/>
<path d="M641 547 l8 1 l-1 5 l-8 -1 z" fill="#a6ece6"/>
<path d="M636 553 Q631 556 633 561 L636 566 Q632 570 635 573 L646 577" fill="none" stroke="#ff9c12" stroke-width="2.4"/>
<path d="M637 556 l1.5 2.5 M637 567 l1.5 2" stroke="#ff9c12" stroke-width="1.6"/>
<use href="#pTh" fill="#f0eeee"/>
<g clip-path="url(#cTh)">
 <path d="M652.9 543.6 L666.6 526.6 L694.1 508.4 L714.2 498.7 L716.1 510.6 L710.6 527 L699.6 538 L675.8 547.2 L654.7 555.5 Z" fill="#1c1c1c"/>
 <path d="M668 524.6 L694.1 507.6 L700 505 L672 523.6 Z" fill="#e6e6c0"/>
 <path d="M712 500 q6 -1 7 4 q0 5 -5 5 q-5 -1 -2 -9z" fill="#e0a030"/>
 
 <circle cx="736.7" cy="524.2" r="2.9" fill="#e6bcb0"/><circle cx="743.8" cy="517.7" r="1.5" fill="#e6bcb0"/>
 <!-- pink area -->
 <path d="M738.5 496.9 L759.8 485.1 L762.2 491 L771.7 499.3 L768.1 511.1 L765.7 519.4 L759.8 518.3 L752.7 513.5 L749.1 506.4 L744.4 501.7 Z" fill="#e8c4b4"/>
 <path d="M738.5 499.3 L745.6 499.9 L750.3 506.4 L749.1 510 L743.2 504.6 Z" fill="#1c1c1c"/>
 <path d="M771.7 499.9 L781.1 506.4 L783.5 510 L776.4 517.1 L766.9 521.8 L762.2 519.4 L768.1 513.5 Z" fill="#1c1c1c"/>
 <path d="M739 492.2 L758.6 481.5 L759.8 485.1 L749.1 489.8 Z" fill="#dce640"/>
 <path d="M753.9 513.5 L761 509.4 L757.4 515.9 Z" fill="#dce640"/>
 <path d="M726 512 Q731 514 732 522 Q734 530 738 535 L733 537 Q726 528 725 518 Z" fill="#e8b43c" opacity="0.85"/>
 <!-- distal black -->
 <path d="M772 474.9 L782 463 L794.8 452 L805.8 449.2 L815 452.9 L818.6 460.2 L813.2 472.1 L802.2 490.4 L791.2 501.4 L783.8 501.4 L780.2 490.4 L776.5 481.3 Z" fill="#1a1a1a"/>
 <path d="M790 458 L798 452.4 L800 453.6 L792 460 Z" fill="#a8c060"/>
 <path d="M806 451 q8 2 9 10 q-3 -5 -9 -6 z" fill="#3a3a3a"/>
 <!-- joint white ring -->
 <path d="M762 480 Q770 476 776 480 Q782 492 783 502 Q778 506 772 502 Q764 492 762 480 Z" fill="#f0e6e2"/>
 <path d="M770 483 q4 0 5 5 q-2 4 -5 2 z" fill="#e8c4b4"/>
</g>
<g fill="none" stroke="#ff9c12" stroke-width="2.6">
 <use href="#pTh"/>
 <path d="M652 542 Q655 548 654.7 555.5 L675.8 548 L699.6 539 L710.6 528 L716.4 511 L716.1 497"/>
 <path d="M734.9 493.4 Q725 501 723.4 513 Q722.6 526 729 535 Q734 543.6 739 544 Q745 543.6 749.1 540.8 L763.4 532.5 L772.8 525.4"/>
 <path d="M736 497 Q744 497.6 748.4 504 Q752 512.6 758.6 518 Q764 521.6 770 519.6"/>
 <path d="M762 480 Q770 476 776 480 Q782 492 783 502 Q778 506 772 502 Q764 492 762 480 Z"/>
 <path d="M771 474 Q776 476 779 484 Q782 494 786 502 L789 505"/>
 <circle cx="733.7" cy="510" r="2.6"/><circle cx="772.6" cy="487" r="2"/>
 <path d="M808 449.6 Q816 452 817.6 461"/>
</g>
<circle cx="655.6" cy="571.4" r="3" fill="#e8a020"/><circle cx="655.6" cy="571.4" r="1.3" fill="#f0d090"/>
<ellipse cx="741" cy="549" rx="2.4" ry="1.6" fill="#e8a828"/><ellipse cx="671.6" cy="589" rx="1.8" ry="1.6" fill="#e8a828"/>
<path d="M659.3 590.4 Q656 596 657 600" stroke="#ff9c12" stroke-width="1.8" fill="none"/>

<!-- gizmo -->
<path d="M656.4 601.4 L673.8 602.4 L673.8 619 L656.4 617.4 Z" fill="#a85c62"/>
<path d="M597 619.5 L601.4 613.3 L601.4 630.8 L597 636.4 Z" fill="#5a9a6a"/>
<path d="M646.3 677.6 L664.9 679.3 L660.9 687.3 L642.3 685.4 Z" fill="#4a80a8"/>
<path d="M610.8 658.3 L596.8 680.4" stroke="#a85c62" stroke-width="1.5"/>
<rect x="593.4" y="679.4" width="6.4" height="7.8" fill="#a85c62"/>
<path d="M618 655.3 L677 660.8" stroke="#5fa878" stroke-width="1.6"/>
<path d="M676 657 L685.4 661.5 L676 664.6 Z" fill="#5fa878"/>
<path d="M612.7 653 V592" stroke="#4282b4" stroke-width="1.7"/>
<path d="M609.2 593.8 L612.7 584.4 L616.2 593.8 Z" fill="#4282b4"/>
<circle cx="612.7" cy="654.7" r="5" fill="#a4f0f0"/>
</g>
</svg>

<span style="left:8.0px;top:899.5px;font-size:13px;color:#9a9a9a;transform:scaleX(0.9496)">Console</span>
<span style="left:94.0px;top:899.5px;font-size:13px;color:#dcdcdc;transform:scaleX(1.0407)">Content</span>
<span style="left:9.2px;top:3.5px;font-size:13px;color:#e4e4e4;transform:scaleX(0.8495)">File</span>
<span style="left:34.2px;top:3.5px;font-size:13px;color:#e4e4e4;transform:scaleX(0.9417)">Edit</span>
<span style="left:62.4px;top:3.5px;font-size:13px;color:#e4e4e4;transform:scaleX(0.9582)">Create</span>
<span style="left:107.1px;top:3.5px;font-size:13px;color:#e4e4e4;transform:scaleX(0.9686)">Window</span>
<span style="left:159.4px;top:3.5px;font-size:13px;color:#e4e4e4;transform:scaleX(0.9388)">Tools</span>
<span style="left:195.4px;top:3.5px;font-size:13px;color:#e4e4e4;transform:scaleX(1.0118)">Utilities</span>
<span style="left:245.3px;top:3.5px;font-size:13px;color:#e4e4e4;transform:scaleX(0.9682)">Layouts</span>
<span style="left:297.3px;top:3.5px;font-size:13px;color:#e4e4e4;transform:scaleX(0.9458)">Help</span>
<span style="left:1419.2px;top:3.5px;font-size:13px;color:#f0f0f0;transform:scaleX(0.8692)">LIVE</span>
<span style="left:1475.2px;top:3.5px;font-size:13px;color:#d8d8d8;transform:scaleX(0.8651)">CACHE:</span>
<span style="left:1547.7px;top:3.5px;font-size:13px;color:#76b900;transform:scaleX(0.8698)">NEW VERSION DETECTED</span>
<span style="left:1215.7px;top:30.5px;font-size:13px;color:#dcdcdc;transform:scaleX(0.9563)">Stage</span>
<span style="left:1288.7px;top:30.5px;font-size:13px;color:#9a9a9a;transform:scaleX(0.9837)">Layer</span>
<span style="left:1360.7px;top:30.5px;font-size:13px;color:#9a9a9a;transform:scaleX(0.9932)">Render Settings</span>
<span style="left:1241.7px;top:63.5px;font-size:12px;color:#5e5e5e;transform:scaleX(1.0255)">Search</span>
<span style="left:1222.3px;top:90.6px;font-size:9.6px;color:#d0d0d0;transform:scaleX(1.1399)">Name (Old to New)</span>
<span style="left:1618.7px;top:90.6px;font-size:9.6px;color:#d0d0d0;transform:scaleX(1.0907)">Type</span>
<span style="left:1256.1px;top:107.5px;font-size:13.5px;color:#e2e2e2;transform:scaleX(0.9574)">inspire_hand (defaultPrim)</span>
<span style="left:1616.7px;top:107.5px;font-size:13.5px;color:#e2e2e2;transform:scaleX(0.9551)">Xform</span>
<span style="left:1215.7px;top:253.3px;font-size:13px;color:#9a9a9a;transform:scaleX(1.0053)">Property</span>
<span style="left:1304.7px;top:253.3px;font-size:13px;color:#dcdcdc;transform:scaleX(0.9548)">Physics Debug</span>
<span style="left:1238.7px;top:289.2px;font-size:12px;color:#d6d6d6;transform:scaleX(1.1038)">Mass Information</span>
<span style="left:1232.7px;top:317.5px;font-size:12px;color:#d6d6d6;transform:scaleX(1.0853)">Get mass information for selected prims and its sub-hierarchies</span>
<span style="left:1238.7px;top:356.5px;font-size:12px;color:#d6d6d6;transform:scaleX(1.0792)">Simulation Debug Visualization</span>
<span style="left:1227.2px;top:381.5px;font-size:12px;color:#d0d0d0;transform:scaleX(1.0375)">Enabled</span>
<span style="left:1227.2px;top:405.5px;font-size:12px;color:#d0d0d0;transform:scaleX(1.0776)">Visibility Maximum Distance</span>
<span style="left:1508.0px;top:405.8px;font-size:12px;color:#d6d6d6;transform:scaleX(1.0190)">1000.0</span>
<span style="left:1227.2px;top:429.5px;font-size:12px;color:#d0d0d0;transform:scaleX(0.9690)">Scale</span>
<span style="left:1518.0px;top:430.1px;font-size:12px;color:#d6d6d6;transform:scaleX(0.9888)">1.0</span>
<span style="left:1238.7px;top:460.7px;font-size:12px;color:#d6d6d6;transform:scaleX(1.0700)">Deformable Debug Visualization</span>
<span style="left:1227.2px;top:486.5px;font-size:12px;color:#d0d0d0;transform:scaleX(1.0736)">Stage Tetrahedral Mesh Gap</span>
<span style="left:1518.0px;top:487.2px;font-size:12px;color:#d6d6d6;transform:scaleX(0.9888)">0.2</span>
<span style="left:1238.7px;top:517.5px;font-size:12px;color:#d6d6d6;transform:scaleX(1.0644)">Particles Debug Visualization</span>
<span style="left:1227.2px;top:543.5px;font-size:12px;color:#d0d0d0;transform:scaleX(1.0396)">Particle Radius</span>
<span style="left:1434.7px;top:543.8px;font-size:12px;color:#d6d6d6;transform:scaleX(1.0789)">Particle Contact Offset</span>
<span style="left:1227.2px;top:567.5px;font-size:12px;color:#d0d0d0;transform:scaleX(1.0538)">Particle Positions</span>
<span style="left:1434.7px;top:567.9px;font-size:12px;color:#d6d6d6;transform:scaleX(1.0371)">Sim Positions</span>
<span style="left:1227.2px;top:590.5px;font-size:12px;color:#d0d0d0;transform:scaleX(1.0728)">Cloth Wireframe</span>
<span style="left:1238.7px;top:621.5px;font-size:12px;color:#d6d6d6;transform:scaleX(1.0645)">Collision Mesh Debug Visualization</span>
<span style="left:1227.2px;top:646.5px;font-size:12px;color:#d0d0d0;transform:scaleX(1.0513)">Solid Collision Mesh Visualization</span>
<span style="left:1227.2px;top:670.8px;font-size:12px;color:#d0d0d0;transform:scaleX(1.0411)">Collision Mesh Display Type</span>
<span style="left:1434.7px;top:670.8px;font-size:12px;color:#d6d6d6;transform:scaleX(1.0537)">Collision Only</span>
<span style="left:1227.2px;top:694.5px;font-size:12px;color:#d0d0d0;transform:scaleX(1.0448)">Explode View Distance</span>
<span style="left:1518.0px;top:695.3px;font-size:12px;color:#d6d6d6;transform:scaleX(0.9888)">0.0</span>
<span style="left:1238.7px;top:725.8px;font-size:12px;color:#d6d6d6;transform:scaleX(1.0636)">Vehicle Debug Visualization</span>
<span style="left:1227.2px;top:757.5px;font-size:12px;color:#d0d0d0;transform:scaleX(1.0507)">Suspension</span>
<span style="left:1238.7px;top:794.6px;font-size:12px;color:#d6d6d6;transform:scaleX(0.9973)">OmniPVD</span>
<span style="left:1227.2px;top:819.8px;font-size:12px;color:#d0d0d0;transform:scaleX(1.0453)">Recording Enabled</span>
<span style="left:1258.7px;top:846.5px;font-size:12px;color:#d6d6d6;transform:scaleX(1.0676)">Set Recording Directory</span>
<span style="left:1434.7px;top:847.5px;font-size:12px;color:#d6d6d6;transform:scaleX(1.1235)">/home/akissel/Documents/omni_pvd/out/</span>
<span style="left:1238.7px;top:886.8px;font-size:12px;color:#d6d6d6;transform:scaleX(0.9805)">Legacy PVD</span>
<span style="left:1227.2px;top:911.6px;font-size:12px;color:#d0d0d0;transform:scaleX(0.9924)">PVD Enabled</span>
<span style="left:128.3px;top:40.2px;font-size:13px;color:#d2d2d2;transform:scaleX(0.9098)">RTX - Real-Time 2.0</span>
<span style="left:329.3px;top:40.2px;font-size:13px;color:#d2d2d2;transform:scaleX(0.9540)">Perspective</span>
<span style="left:1147.2px;top:40.4px;font-size:13px;color:#d2d2d2;transform:scaleX(1.0169)">Default</span>
<span style="left:999.7px;top:76.0px;font-size:12px;color:#dcdcdc;transform:scaleX(1.0065)">FPS: 103.72, Frame time: 9.64 ms</span>
<span style="left:855.1px;top:95.6px;font-size:12px;color:#dcdcdc;transform:scaleX(1.0079)">NVIDIA GeForce RTX 4090: 1.2 GiB used, 19.4 GiB available</span>
<span style="left:900.7px;top:114.8px;font-size:12px;color:#dcdcdc;transform:scaleX(1.0246)">Process Memory: 8.2 GiB used, 103.3 GiB available</span>
<span style="left:1129.7px;top:134.5px;font-size:12px;color:#dcdcdc;transform:scaleX(1.0535)">1148x857</span>
<span style="left:76.2px;top:866.5px;font-size:12px;color:#d8d8d8;transform:scaleX(1.0000)">m</span>
<span style="left:77.7px;top:815.5px;font-size:12px;color:#4f8fc5;transform:scaleX(0.9532)">Z</span>
<span style="left:99.7px;top:838.5px;font-size:12px;color:#5fa463;transform:scaleX(0.8733)">Y</span>
<span style="left:72.7px;top:842.0px;font-size:12px;color:#b8504c;transform:scaleX(0.8733)">X</span>
</div>
</body></html>
